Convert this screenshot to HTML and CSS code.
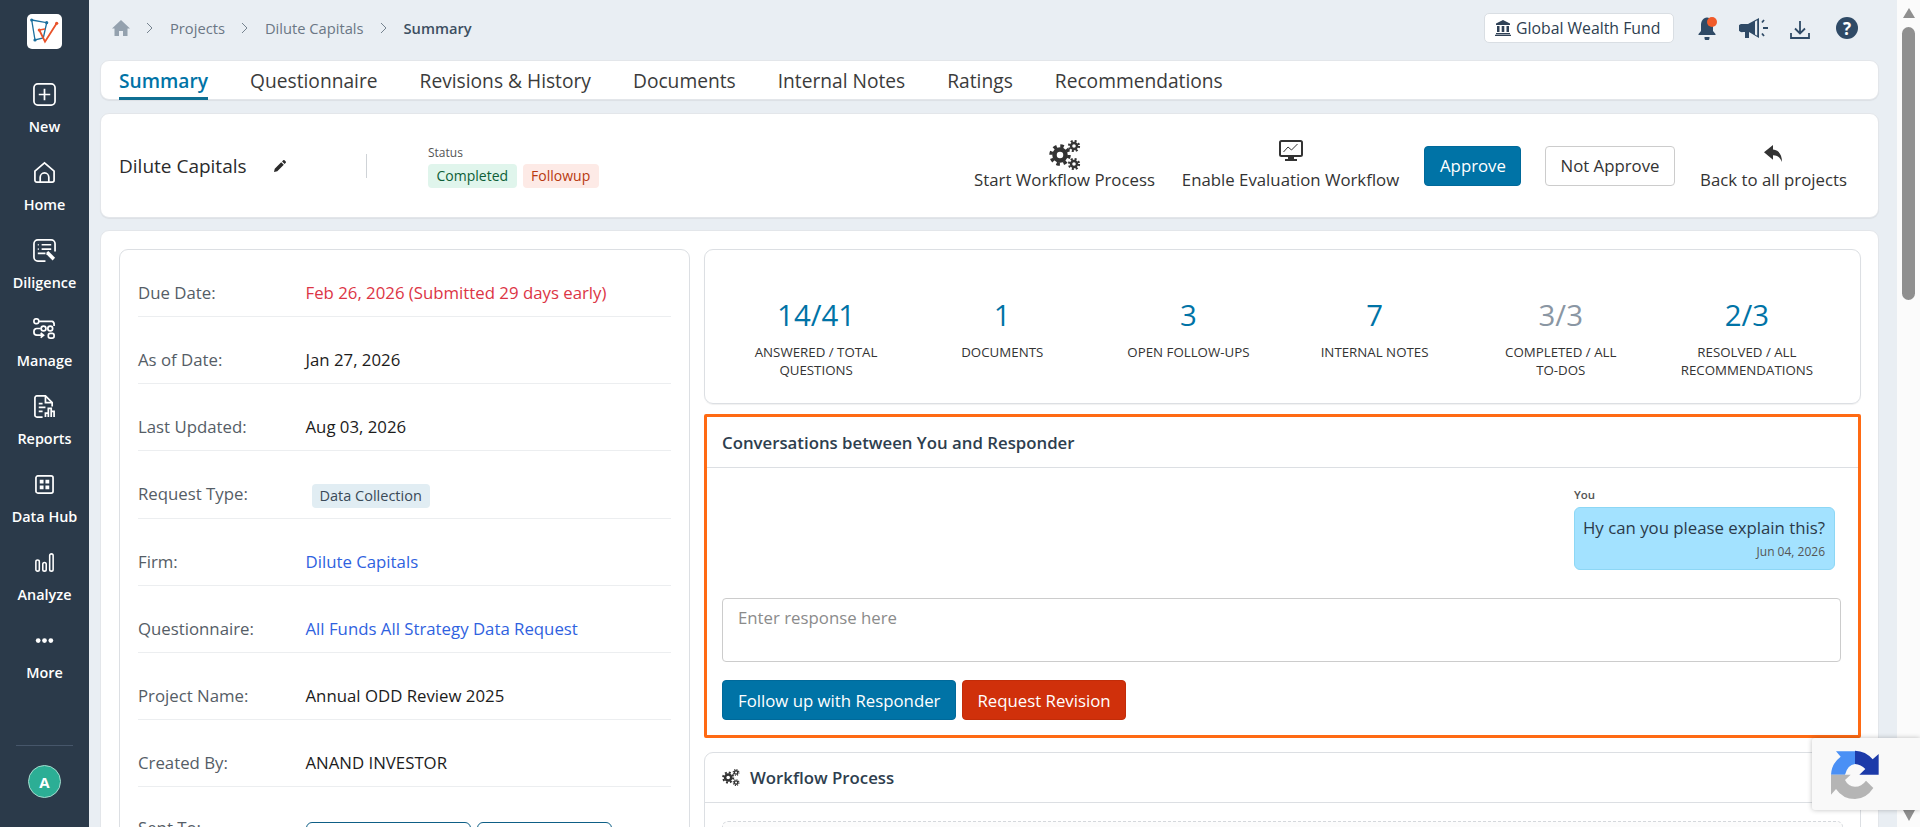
FILE: index.html
```html
<!DOCTYPE html>
<html lang="en">
<head>
<meta charset="utf-8">
<title>Summary</title>
<link rel="stylesheet" href="styles.css">
</head>
<body>
<div class="app">
  <aside class="sidebar">
    <div class="logo">
      <svg viewBox="0 0 35 35" width="35" height="35"><rect width="35" height="35" rx="5" fill="#fff"/><path d="M4.700 6 19.700 8.700 16.300 24 8 26Z" fill="none" stroke="#1a6f9e" stroke-width="1.300"/><path d="M12.300 16 18 27.700 29.700 9.300" fill="none" stroke="#e8522a" stroke-width="1.800"/><path d="M12.300 16 18 15" stroke="#e8522a" stroke-width="1.300"/><circle cx="4.700" cy="6" r="1.600" fill="#1a6f9e"/><circle cx="19.700" cy="8.700" r="1.600" fill="#1a6f9e"/><circle cx="8" cy="26" r="1.600" fill="#1a6f9e"/><circle cx="29.700" cy="9.300" r="1.600" fill="#e8522a"/><circle cx="12.300" cy="16" r="1.600" fill="#e8522a"/></svg>
    </div>
    <nav class="nav">
      <a class="nav-item"><svg class="nav-icon" viewBox="0 0 24 24"><rect x="1" y="1" width="22" height="22" rx="4" class="st"/><path d="M12 6v12M6 12h12" class="st" stroke-width="2.400"/></svg><span>New</span></a>
      <a class="nav-item"><svg class="nav-icon" viewBox="0 0 24 24"><path d="M2 10.500 12 2l10 8.500V20a2 2 0 0 1-2 2H4a2 2 0 0 1-2-2Z" class="st"/><path d="M7.500 22v-5a4.500 4.500 0 0 1 9 0v5" class="st"/></svg><span>Home</span></a>
      <a class="nav-item"><svg class="nav-icon" viewBox="0 0 24 24"><path d="M13 23H5a4 4 0 0 1-4-4V5a4 4 0 0 1 4-4h14a4 4 0 0 1 4 4v8" class="st"/><path d="M5 6h1M9 6h10M5 10.500h1M9 10.500h10M5 15h8" class="st"/><path d="m14 14 2-1.500 7 7-2.500 3-6.500-6.500Z" fill="#fff"/></svg><span>Diligence</span></a>
      <a class="nav-item"><svg class="nav-icon" viewBox="0 0 24 24"><rect x="1" y="2" width="5" height="5" rx="2" class="st"/><path d="M6 4.500h14a3 3 0 0 1 2 3v2" class="st"/><circle cx="11" cy="12" r="2.500" class="st"/><circle cx="18" cy="12" r="2.500" class="st"/><path d="M8 12H4a3 3 0 0 0-3 3v1a3 3 0 0 0 3 3h6M8 16.500l3 2.500-3 2.500" class="st"/><rect x="16" y="17" width="6" height="5" rx="2" class="st"/></svg><span>Manage</span></a>
      <a class="nav-item"><svg class="nav-icon" viewBox="0 0 24 24"><path d="M10 23H4a2 2 0 0 1-2-2V3a2 2 0 0 1 2-2h9l7 7v4" class="st"/><path d="M13 1v7h7M6 9h4M6 13h7M6 17h4" class="st"/><path d="M13 23v-4h3v4M16 23v-9h3v9M19 23v-6h3v6" class="st" stroke-width="1.500"/></svg><span>Reports</span></a>
      <a class="nav-item"><svg class="nav-icon small" viewBox="0 0 20 20"><rect x="1" y="1" width="18" height="18" rx="2" class="st"/><path d="M5 5h4v4H5zM11 5h4v4h-4zM5 11h4v4H5zM11 11h4v4h-4z" fill="#fff"/></svg><span>Data Hub</span></a>
      <a class="nav-item"><svg class="nav-icon small" viewBox="0 0 22 22"><rect x="1" y="8" width="4" height="13" rx="2" class="st"/><rect x="9" y="11" width="4" height="10" rx="2" class="st"/><rect x="17" y="1" width="4" height="20" rx="2" class="st"/></svg><span>Analyze</span></a>
      <a class="nav-item"><svg class="nav-icon small" viewBox="0 0 24 24"><circle cx="4" cy="12" r="3" fill="#fff"/><circle cx="12" cy="12" r="3" fill="#fff"/><circle cx="20" cy="12" r="3" fill="#fff"/></svg><span>More</span></a>
    </nav>
    <div class="side-foot"><div class="avatar">A</div></div>
  </aside>

  <main class="main">
    <header class="topbar">
      <ol class="crumbs">
        <li><svg width="18" height="18" viewBox="0 0 18 18"><path d="M9 1 0 9.500h2.500V17h4.500v-5h4v5h4.500V9.500H18Z" fill="#94a1ae"/></svg></li>
        <li class="sep"><svg width="8" height="12" viewBox="0 0 8 12"><path d="m1 1 5 5-5 5" fill="none" stroke="#76838f" stroke-width="1"/></svg></li>
        <li>Projects</li>
        <li class="sep"><svg width="8" height="12" viewBox="0 0 8 12"><path d="m1 1 5 5-5 5" fill="none" stroke="#76838f" stroke-width="1"/></svg></li>
        <li>Dilute Capitals</li>
        <li class="sep"><svg width="8" height="12" viewBox="0 0 8 12"><path d="m1 1 5 5-5 5" fill="none" stroke="#76838f" stroke-width="1"/></svg></li>
        <li class="current">Summary</li>
      </ol>
      <div class="top-actions">
        <div class="fund">
          <svg width="16" height="16" viewBox="0 0 16 16"><path d="M8 0 1 3.500V5h14V3.500Z M2 6h2.500v6H2Zm4.700 0h2.600v6H6.700ZM11.500 6H14v6h-2.500ZM1 13h14v1.300H1Zm-1 1.700h16V16H0Z" fill="#2f4156"/></svg>
          <span>Global Wealth Fund</span>
        </div>
        <svg class="bell" width="20" height="24" viewBox="0 0 20 24"><path d="M9 1.500C5 2 3 5 3 9v6l-2.500 3v1h17v-1L15 15V9C15 5 13 2 9 1.500Z" fill="#2f4a66"/><path d="M6.500 21h5v1a2.500 2.500 0 0 1-5 0Z" fill="#2f4a66"/><circle cx="14" cy="6" r="5" fill="#f15a29"/></svg>
        <svg class="mega" width="30" height="22" viewBox="0 0 30 22"><path d="M2 7h7L20 1v20l-5-3-5-3v6H6v-6H4a3 3 0 0 1-2-8Z" fill="#2f4a66"/><path d="M16 4.500v13l2.200 1.300V3.200Z" fill="#e9eef3"/><path d="m25 3-2 2.500M24 11h5M25 19l-2-2.500" stroke="#2f4a66" stroke-width="1.800" fill="none"/></svg>
        <svg class="down" width="20" height="18" viewBox="0 0 20 18"><path d="M10 0v12M5 7.500l5 5 5-5M1 12v5h18v-5" fill="none" stroke="#2f4a66" stroke-width="1.800"/></svg>
        <div class="help">?</div>
      </div>
    </header>

    <nav class="tabs">
      <a class="tab active">Summary</a>
      <a class="tab">Questionnaire</a>
      <a class="tab">Revisions &amp; History</a>
      <a class="tab">Documents</a>
      <a class="tab">Internal Notes</a>
      <a class="tab">Ratings</a>
      <a class="tab">Recommendations</a>
    </nav>

    <section class="headcard">
      <div class="title-wrap">
        <h1 class="title">Dilute Capitals</h1>
        <svg width="12" height="12" viewBox="0 0 13 13"><path d="M0 13l.8-3.600 7-7 2.800 2.800-7 7Z M8.700 1.500 10 .3a1 1 0 0 1 1.400 0l1.300 1.300a1 1 0 0 1 0 1.400L11.500 4.300Z" fill="#2b2b2b"/></svg>
      </div>
      <div class="vline"></div>
      <div class="status">
        <div class="status-label">Status</div>
        <div class="badges"><span class="badge green">Completed</span><span class="badge red">Followup</span></div>
      </div>
      <div class="head-actions">
        <div class="action w-start">
          <svg width="32" height="30" viewBox="0 0 32 30"><g fill="none" stroke="#333"><circle cx="11" cy="15" r="5.500" stroke-width="4.500"/><circle cx="11" cy="15" r="9" stroke-width="3.500" stroke-dasharray="3.500 3.570"/><circle cx="25" cy="6" r="3" stroke-width="2.400"/><circle cx="25" cy="6" r="5" stroke-width="2.200" stroke-dasharray="2 1.930"/><circle cx="25" cy="24" r="3" stroke-width="2.400"/><circle cx="25" cy="24" r="5" stroke-width="2.200" stroke-dasharray="2 1.930"/></g></svg>
          <span>Start Workflow Process</span>
        </div>
        <div class="action w-eval">
          <svg width="24" height="22" viewBox="0 0 24 22"><rect x="1" y="1" width="22" height="15" rx="1.500" fill="none" stroke="#333" stroke-width="2"/><path d="M4.500 12 9 7l3.500 3 6-6" fill="none" stroke="#333" stroke-width="1"/><path d="M9 16h6v3H9ZM6 19h12v2H6Z" fill="#333"/></svg>
          <span>Enable Evaluation Workflow</span>
        </div>
        <button class="btn primary approve">Approve</button>
        <button class="btn outline">Not Approve</button>
        <div class="action w-back">
          <svg width="20" height="18" viewBox="0 0 20 16" preserveAspectRatio="none"><path d="M9 0 0 6.500 9 13V9c4.500 0 7 2 9 6 0-6-3-10.500-9-11Z" fill="#333"/></svg>
          <span>Back to all projects</span>
        </div>
      </div>
    </section>

    <section class="content">
      <div class="details">
        <div class="row"><span class="k">Due Date:</span><span class="v danger">Feb 26, 2026 (Submitted 29 days early)</span></div>
        <div class="row"><span class="k">As of Date:</span><span class="v">Jan 27, 2026</span></div>
        <div class="row"><span class="k">Last Updated:</span><span class="v">Aug 03, 2026</span></div>
        <div class="row tall"><span class="k">Request Type:</span><span class="v"><span class="chip">Data Collection</span></span></div>
        <div class="row"><span class="k">Firm:</span><span class="v link">Dilute Capitals</span></div>
        <div class="row"><span class="k">Questionnaire:</span><span class="v link">All Funds All Strategy Data Request</span></div>
        <div class="row"><span class="k">Project Name:</span><span class="v">Annual ODD Review 2025</span></div>
        <div class="row"><span class="k">Created By:</span><span class="v">ANAND INVESTOR</span></div>
        <div class="row sent"><span class="k">Sent To:</span><span class="v recipients"><span class="rcpt r1"></span><span class="rcpt r2"></span></span></div>
      </div>

      <div class="right">
        <div class="stats">
          <div class="stat"><b>14/41</b><span>Answered / Total Questions</span></div>
          <div class="stat"><b>1</b><span>Documents</span></div>
          <div class="stat"><b>3</b><span>Open Follow-ups</span></div>
          <div class="stat"><b>7</b><span>Internal Notes</span></div>
          <div class="stat muted"><b>3/3</b><span>Completed / All <i class="nb">To-Dos</i></span></div>
          <div class="stat"><b>2/3</b><span>Resolved / All Recommendations</span></div>
        </div>

        <div class="convo">
          <div class="convo-head">Conversations between You and Responder</div>
          <div class="convo-body">
            <div class="msg">
              <div class="msg-who">You</div>
              <div class="bubble">
                <div>Hy can you please explain this?</div>
                <div class="msg-date">Jun 04, 2026</div>
              </div>
            </div>
            <textarea class="reply" placeholder="Enter response here"></textarea>
            <div class="convo-btns">
              <button class="btn primary">Follow up with Responder</button>
              <button class="btn danger-btn">Request Revision</button>
            </div>
          </div>
        </div>

        <div class="workflow">
          <div class="wf-head">
            <svg width="18" height="17" viewBox="0 0 32 30"><g fill="none" stroke="#333"><circle cx="11" cy="15" r="5.500" stroke-width="4.500"/><circle cx="11" cy="15" r="9" stroke-width="3.500" stroke-dasharray="3.500 3.570"/><circle cx="25" cy="6" r="3" stroke-width="2.400"/><circle cx="25" cy="6" r="5" stroke-width="2.200" stroke-dasharray="2 1.930"/><circle cx="25" cy="24" r="3" stroke-width="2.400"/><circle cx="25" cy="24" r="5" stroke-width="2.200" stroke-dasharray="2 1.930"/></g></svg>
            <span>Workflow Process</span>
          </div>
          <div class="wf-body"><div class="wf-dash"></div></div>
        </div>
      </div>
    </section>
  </main>

  <div class="scrollbar">
    <div class="arrow up"></div>
    <div class="thumb"></div>
    <div class="arrow dn"></div>
  </div>

  <div class="recaptcha">
    <svg width="50" height="50" viewBox="150 88 150 150"><path d="M153 162A72 72 0 0 1 182 108L168 92H225V130Q203 132 195 162Z" fill="#4a90f5"/><path d="M225 90A72 72 0 0 1 278 116L296 100V162H238L256 145Q243 131 225 130Z" fill="#1c3aa9"/><path d="M153 162H212L195 178Q205 198 225 198Q245 198 258 180L280 202Q258 235 225 235Q188 235 168 205L153 222Z" fill="#b5b5b5"/></svg>
  </div>
</div>
</body>
</html>
```

FILE: styles.css
```css
* { box-sizing: border-box; }
html, body { margin: 0; height: 100%; overflow: hidden; }
body { font-family: "Open Sans", "Liberation Sans", sans-serif; color: #2d3e50; background: #e9eef3; }
.app { display: flex; height: 827px; position: relative; overflow: hidden; }

/* sidebar */
.sidebar { width: 89px; flex: none; background: #2b3a4a; display: flex; flex-direction: column; align-items: center; color: #fff; }
.logo { margin-top: 14px; height: 35px; width: 35px; }
.logo svg { display: block; }
.nav { margin-top: 29px; display: flex; flex-direction: column; width: 100%; }
.nav-item { height: 78px; display: flex; flex-direction: column; align-items: center; font-size: 14.400px; font-weight: 600; line-height: 18px; }
.nav-icon { width: 23px; height: 23px; margin-top: 5px; margin-bottom: 12px; flex: none; }
.nav-icon.small { width: 19px; height: 19px; margin-top: 7px; margin-bottom: 14px; }
.st { fill: none; stroke: #fff; stroke-width: 1.800; }
.side-foot { margin-top: auto; width: 57px; border-top: 1px solid #46566a; padding: 19px 0 29px; display: flex; justify-content: center; }
.avatar { width: 33px; height: 33px; border-radius: 50%; background: #2cae95; border: 1px solid #a6dccf; color: #fff; font-weight: 700; font-size: 15px; display: flex; align-items: center; justify-content: center; }

/* main */
.main { flex: 1; min-width: 0; padding: 0 18px 0 11px; overflow: hidden; }
.topbar { height: 60px; display: flex; align-items: flex-start; justify-content: space-between; }
.crumbs { list-style: none; margin: 0; padding: 18px 0 0 12px; display: flex; align-items: center; font-size: 14.700px; color: #6b7785; line-height: 20px; }
.crumbs li { display: flex; }
.crumbs .sep { margin: 0 16px; }
.crumbs .current { font-weight: 600; color: #3d4f61; }
.top-actions { display: flex; align-items: center; margin-top: 13px; margin-right: 21px; }
.fund { width: 190px; height: 30px; background: #fff; border: 1px solid #d9dee3; border-radius: 5px; display: flex; align-items: center; gap: 5px; padding-left: 10px; font-size: 15.800px; color: #2d3e50; }
.bell { margin-left: 24px; }
.mega { margin-left: 21px; }
.down { margin-left: 21px; margin-top: 3px; }
.help { width: 22px; height: 22px; margin-left: 26px; border-radius: 50%; background: #2f4a66; color: #fff; font-weight: 700; font-size: 17px; display: flex; align-items: center; justify-content: center; }

.tabs { height: 40px; background: #fff; border-radius: 9px; border: 1px solid #e3e6ea; box-shadow: 0 1px 1px rgba(0,0,0,.06); padding-left: 18px; display: flex; gap: 42px; font-size: 19.200px; line-height: 40px; color: #3b3b3b; }
.tab { height: 39px; }
.tab.active { color: #0073a6; font-weight: 600; border-bottom: 3px solid #0e6f93; }

.headcard { margin-top: 13px; height: 105px; background: #fff; border-radius: 9px; border: 1px solid #e3e6ea; box-shadow: 0 1px 1px rgba(0,0,0,.06); display: flex; align-items: center; padding-left: 18px; }
.title-wrap { width: 247px; display: flex; align-items: center; gap: 27px; }
.title { margin: 0; font-size: 19px; font-weight: 400; color: #2b2b2b; line-height: 24px; }
.vline { width: 1px; height: 24px; background: #cfd3d7; }
.status { margin-left: 61px; }
.status-label { font-size: 12px; color: #555; line-height: 18px; }
.badges { display: flex; gap: 6px; margin-top: 2px; }
.badge { height: 24px; padding: 0 8.500px; border-radius: 4px; font-size: 14px; line-height: 24px; }
.badge.green { background: #e0f5ec; color: #0d5f38; }
.badge.red { background: #fdeae6; color: #b8390f; }
.head-actions { margin-left: auto; display: flex; align-items: center; padding-right: 31px; }
.action { display: flex; flex-direction: column; align-items: center; justify-content: flex-end; font-size: 16.800px; line-height: 20px; color: #333; height: 50px; margin-top: -2px; white-space: nowrap; }
.action svg { margin-bottom: auto; }
.w-start { width: 181px; }
.w-eval { width: 217px; margin-left: 27px; }
.w-back { width: 147px; margin-left: 25px; }
.w-back svg { margin-top: 5px; }
.btn { font-family: inherit; font-size: 16.800px; height: 40px; padding: 0 15px; border-radius: 4px; border: 1px solid transparent; white-space: nowrap; }
.btn.primary { background: #0073a6; color: #fff; border-color: #00699a; }
.btn.outline { background: #fff; color: #333; border-color: #ccc; margin-left: 24px; width: 130px; padding: 0; }
.btn.danger-btn { background: #d0300b; color: #fff; border-color: #c22c09; padding: 0 14px; }
.approve { margin-left: 25px; width: 97px; }

/* content */
.content { margin-top: 12px; background: #fff; border-radius: 9px 9px 0 0; border: 1px solid #e3e6ea; padding: 18px 17px 0 18px; display: grid; grid-template-columns: 571px 1fr; gap: 14px; height: 700px; }
.details { border: 1px solid #dcdfe3; border-radius: 9px; padding: 0 18px; height: 700px; }
.row { height: 67px; border-bottom: 1px solid #eceef0; padding-top: 32px; display: grid; grid-template-columns: 167.500px 1fr; font-size: 16.800px; line-height: 21px; }
.row.tall { height: 68px; }
.k { color: #555d66; }
.v { color: #1c1c1c; }
.v.danger { color: #dc3545; }
.v.link { color: #2f62e0; }
.chip { display: inline-block; margin-left: 6px; margin-top: 1px; padding: 0 8px; height: 24px; line-height: 24px; border-radius: 4px; background: #e1edf3; font-size: 14.500px; color: #3a4a58; vertical-align: top; }
.row.sent { border: 0; padding-top: 30px; }
.recipients { display: flex; gap: 6px; margin-top: 5px; }
.rcpt { height: 30px; border: 1px solid #0e5f86; border-radius: 6px; }
.r1 { width: 165px; }
.r2 { width: 135px; }

.right { display: flex; flex-direction: column; }
.stats { height: 155px; border: 1px solid #dcdfe3; border-radius: 9px; box-shadow: 0 1px 1px rgba(0,0,0,.06); padding: 45px 20px 0 18px; display: grid; grid-template-columns: repeat(6, 1fr); align-content: start; }
.stat { display: flex; flex-direction: column; align-items: center; text-align: center; padding: 0 24px; }
.stat b { font-size: 29.400px; font-weight: 400; line-height: 40px; color: #0073a6; }
.stat span { font-size: 13.300px; line-height: 18px; text-transform: uppercase; color: #333; margin-top: 8px; }
.stat.muted b { color: #8a96a3; }
.nb { font-style: normal; white-space: nowrap; }

.convo { margin-top: 10px; height: 324px; border: 3px solid #ff6a13; border-radius: 2px; }
.convo-head { height: 51px; border-bottom: 1px solid #dcdfe3; padding: 0 15px; font-size: 16.800px; font-weight: 600; line-height: 52px; color: #2e3e4e; }
.convo-body { padding: 0 17px 0 15px; display: flex; flex-direction: column; }
.msg { align-self: flex-end; width: 261px; margin-top: 19px; margin-right: 6px; }
.msg-who { font-size: 11.500px; font-weight: 600; line-height: 16px; color: #555; }
.bubble { margin-top: 4px; height: 63px; padding: 9px 9px 0 8px; background: #a3e2ff; border: 1px solid #8dd7f5; border-radius: 6px; font-size: 16.800px; line-height: 22px; color: #2b3a4a; text-align: right; white-space: nowrap; }
.msg-date { font-size: 12px; line-height: 16px; color: #555; margin-top: 5px; }
.reply { margin-top: 28px; height: 64px; width: 100%; padding: 8px 15px; border: 1px solid #ccc; border-radius: 4px; font-family: inherit; font-size: 16.800px; line-height: 22px; resize: none; display: block; }
.reply::placeholder { color: #8b8b8b; }
.convo-btns { margin-top: 18px; display: flex; gap: 6px; }

.workflow { margin-top: 14px; height: 200px; border: 1px solid #dcdfe3; border-radius: 9px; }
.wf-head { height: 50px; border-bottom: 1px solid #dcdfe3; display: flex; align-items: center; gap: 10px; padding-left: 17px; font-size: 16.800px; font-weight: 600; color: #2e3e4e; }
.wf-body { padding: 18px 17px 0; }
.wf-dash { height: 100px; border: 1px dashed #d5d8dc; border-radius: 6px; background: #fcfcfc; }

/* scrollbar + badge */
.scrollbar { width: 23px; flex: none; background: #fbfbfb; display: flex; flex-direction: column; align-items: center; }
.arrow { width: 0; height: 0; border-left: 6.500px solid transparent; border-right: 6.500px solid transparent; }
.arrow.up { border-bottom: 10px solid #8f8f8f; margin-top: 8px; }
.arrow.dn { border-top: 11px solid #8f8f8f; margin-top: 510px; }
.thumb { width: 13px; height: 273px; margin-top: 9px; border-radius: 7px; background: #8f8f8f; }
.recaptcha { position: absolute; left: 1812px; top: 738px; width: 108px; height: 72px; background: #f9f9f9; border-radius: 3px 0 0 3px; box-shadow: 0 0 5px rgba(0,0,0,.25); padding: 12px 0 0 18px; }
```
